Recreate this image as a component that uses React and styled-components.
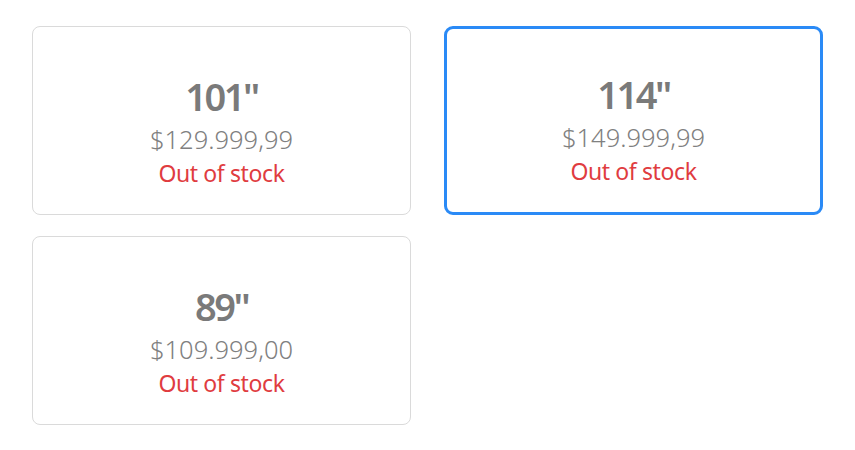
import React from "react";
import styled, { createGlobalStyle } from "styled-components";

const GlobalStyle = createGlobalStyle`
  body {
    margin: 0;
    background: #ffffff;
    font-family: "Noto Sans", "Open Sans", sans-serif;
  }
`;

const sizes = [
  { id: 1, label: '101"', price: "$129.999,99", stock: "Out of stock" },
  { id: 2, label: '114"', price: "$149.999,99", stock: "Out of stock", selected: true },
  { id: 3, label: '89"', price: "$109.999,00", stock: "Out of stock" },
];

const Page = styled.div`
  padding: 26px 32px;
`;

const Grid = styled.div`
  display: grid;
  grid-template-columns: 1fr 1fr;
  column-gap: 33px;
  row-gap: 21px;
`;

const Card = styled.div`
  box-sizing: border-box;
  height: 189px;
  display: flex;
  flex-direction: column;
  align-items: center;
  padding-top: ${(p) => (p.$selected ? "45px" : "49px")};
  border: ${(p) => (p.$selected ? "3px solid #2a8af6" : "1px solid #dadada")};
  border-radius: ${(p) => (p.$selected ? "9px" : "8px")};
  background: #fff;
`;

const Size = styled.div`
  font-size: 38px;
  line-height: 40px;
  font-weight: 600;
  letter-spacing: -2.5px;
  color: #7a7a7a;
`;

const Price = styled.div`
  margin-top: 7px;
  font-size: 25.5px;
  line-height: 33px;
  font-weight: 300;
  color: #808080;
`;

const Stock = styled.div`
  margin-top: 2px;
  font-size: 23px;
  line-height: 30px;
  letter-spacing: -0.4px;
  color: #e03c3f;
`;

export default function App() {
  return (
    <Page>
      <GlobalStyle />
      <Grid>
        {sizes.map((s) => (
          <Card key={s.id} $selected={s.selected}>
            <Size>{s.label}</Size>
            <Price>{s.price}</Price>
            <Stock>{s.stock}</Stock>
          </Card>
        ))}
      </Grid>
    </Page>
  );
}
